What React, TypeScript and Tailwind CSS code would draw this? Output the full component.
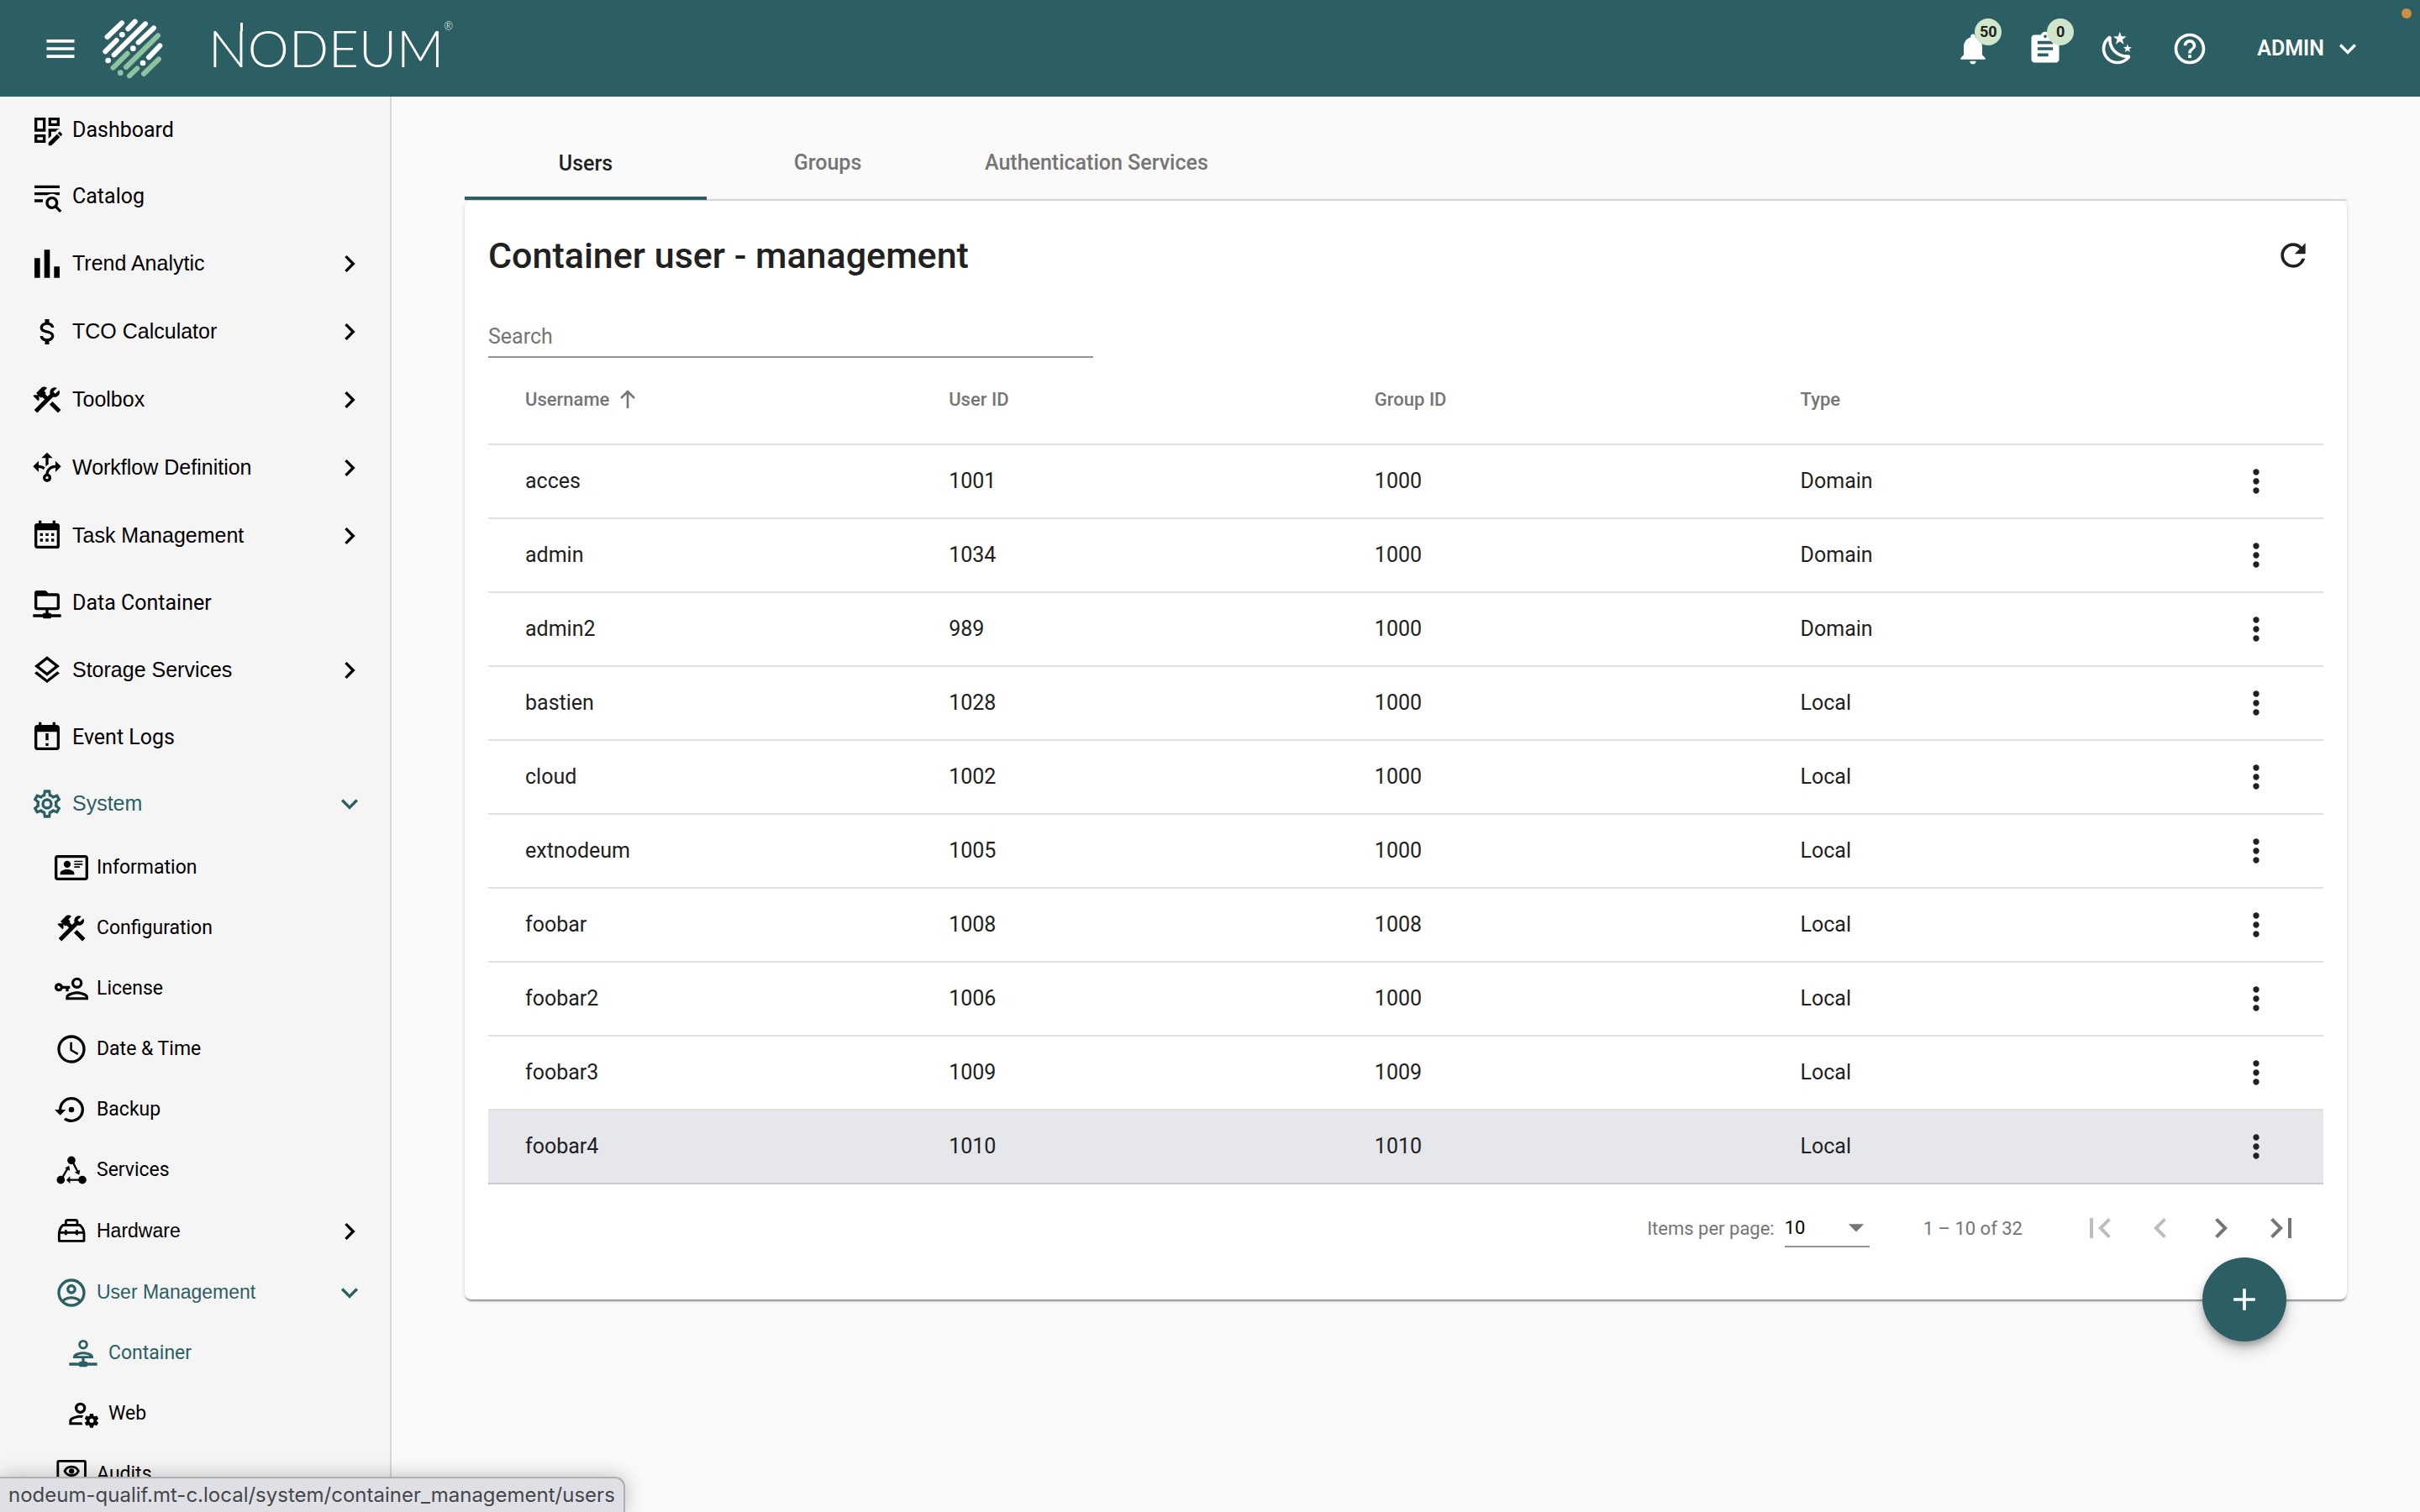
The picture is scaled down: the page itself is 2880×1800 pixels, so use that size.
import React from "react";
import {
  MdAdd,
  MdArrowDropDown,
  MdAssignment,
  MdChevronLeft,
  MdChevronRight,
  MdExpandMore,
  MdFirstPage,
  MdHelpOutline,
  MdLastPage,
  MdMenu,
  MdMoreVert,
  MdNotifications,
  MdRefresh,
} from "react-icons/md";

const paths = {
  dashboard:
    "M21 13.1C20.9 13.1 20.7 13.2 20.6 13.3L19.6 14.3L21.7 16.4L22.7 15.4C22.9 15.2 22.9 14.8 22.7 14.6L21.4 13.3C21.3 13.2 21.2 13.1 21 13.1M19.1 14.9L13 20.9V23H15.1L21.2 16.9L19.1 14.9M21 3H13V9H21V3M19 7H15V5H19V7M13 18.06V11H21V11.1C20.24 11.1 19.57 11.5 19.19 11.89L18.07 13H15V16.07L13 18.06M11 3H3V13H11V3M9 11H5V5H9V11M11 20.06V15H3V21H11V20.06M9 19H5V17H9V19Z",
  catalog:
    "M19.31 18.9L22.39 22L21 23.39L17.88 20.32C17.19 20.75 16.37 21 15.5 21C13 21 11 19 11 16.5C11 14 13 12 15.5 12C18 12 20 14 20 16.5C20 17.38 19.75 18.21 19.31 18.9M15.5 19C16.88 19 18 17.88 18 16.5C18 15.12 16.88 14 15.5 14C14.12 14 13 15.12 13 16.5C13 17.88 14.12 19 15.5 19M21 4V6H3V4H21M3 16V14H9V16H3M3 11V9H21V11H18.97C17.96 10.37 16.77 10 15.5 10C14.23 10 13.04 10.37 12.03 11H3Z",
  poll: "M3,22V8H7V22H3M10,22V2H14V22H10M17,22V14H21V22H17Z",
  dollar:
    "M7,15H9C9,16.08 10.37,17 12,17C13.63,17 15,16.08 15,15C15,13.9 13.96,13.5 11.76,12.97C9.64,12.44 7,11.78 7,9C7,7.21 8.47,5.69 10.5,5.18V3H13.5V5.18C15.53,5.69 17,7.21 17,9H15C15,7.92 13.63,7 12,7C10.37,7 9,7.92 9,9C9,10.1 10.04,10.5 12.24,11.03C14.36,11.56 17,12.22 17,15C17,16.79 15.53,18.31 13.5,18.82V21H10.5V18.82C8.47,18.31 7,16.79 7,15Z",
  tools:
    "M13.78 15.3L19.78 21.3L21.89 19.14L15.89 13.14L13.78 15.3M17.5 10.1C17.11 10.1 16.69 10.05 16.36 9.91L4.97 21.25L2.86 19.14L10.27 11.74L8.5 9.96L7.78 10.66L6.33 9.25V12.11L5.63 12.81L2.11 9.25L2.81 8.55H5.62L4.22 7.14L7.78 3.58C8.95 2.41 10.83 2.41 12 3.58L9.89 5.74L11.3 7.14L10.59 7.85L12.38 9.63L14.2 7.75C14.06 7.42 14 7 14 6.63C14 4.66 15.56 3.11 17.5 3.11C18.09 3.11 18.61 3.25 19.08 3.53L16.41 6.2L17.91 7.7L20.58 5.03C20.86 5.5 21 6 21 6.63C21 8.55 19.45 10.1 17.5 10.1Z",
  workflow:
    "M9.64,13.4C8.63,12.5 7.34,12.03 6,12V15L2,11L6,7V10C7.67,10 9.3,10.57 10.63,11.59C10.22,12.15 9.89,12.76 9.64,13.4M18,15V12C17.5,12 13.5,12.16 13.05,16.2C14.61,16.75 15.43,18.47 14.88,20.03C14.33,21.59 12.61,22.41 11.05,21.86C9.5,21.3 8.67,19.59 9.22,18.03C9.5,17.17 10.2,16.5 11.05,16.2C11.34,12.61 14.4,9.88 18,10V7L22,11L18,15M13,19A1,1 0 0,0 12,18A1,1 0 0,0 11,19A1,1 0 0,0 12,20A1,1 0 0,0 13,19M11,11.12C11.58,10.46 12.25,9.89 13,9.43V5H16L12,1L8,5H11V11.12Z",
  calendar:
    "M9,10V12H7V10H9M13,10V12H11V10H13M17,10V12H15V10H17M19,3A2,2 0 0,1 21,5V19A2,2 0 0,1 19,21H5C3.89,21 3,20.1 3,19V5A2,2 0 0,1 5,3H6V1H8V3H16V1H18V3H19M19,19V8H5V19H19M9,14V16H7V14H9M13,14V16H11V14H13M17,14V16H15V14H17Z",
  folder:
    "M15,20A1,1 0 0,0 14,19H13V17H19A2,2 0 0,0 21,15V7A2,2 0 0,0 19,5H13L11,3H5A2,2 0 0,0 3,5V15A2,2 0 0,0 5,17H11V19H10A1,1 0 0,0 9,20H2V22H9A1,1 0 0,0 10,23H14A1,1 0 0,0 15,22H22V20H15M5,15V7H19V15H5Z",
  layers:
    "M12,18.54L19.37,12.8L21,14.07L12,21.07L3,14.07L4.62,12.81L12,18.54M12,16L3,9L12,2L21,9L12,16M12,4.53L6.26,9L12,13.47L17.74,9L12,4.53Z",
  events:
    "M19 3H18V1H16V3H8V1H6V3H5C3.89 3 3 3.9 3 5V19C3 20.1 3.89 21 5 21H19C20.11 21 21 20.1 21 19V5C21 3.9 20.11 3 19 3M19 19H5V8H19V19M11 9H13V14H11V9M11 16H13V18H11Z",
  cog: "M12,8A4,4 0 0,1 16,12A4,4 0 0,1 12,16A4,4 0 0,1 8,12A4,4 0 0,1 12,8M12,10A2,2 0 0,0 10,12A2,2 0 0,0 12,14A2,2 0 0,0 14,12A2,2 0 0,0 12,10M10,22C9.75,22 9.54,21.82 9.5,21.58L9.13,18.93C8.5,18.68 7.96,18.34 7.44,17.94L4.95,18.95C4.73,19.03 4.46,18.95 4.34,18.73L2.34,15.27C2.21,15.05 2.27,14.78 2.46,14.63L4.57,12.97L4.5,12L4.57,11L2.46,9.37C2.27,9.22 2.21,8.95 2.34,8.73L4.34,5.27C4.46,5.05 4.73,4.96 4.95,5.05L7.44,6.05C7.96,5.66 8.5,5.32 9.13,5.07L9.5,2.42C9.54,2.18 9.75,2 10,2H14C14.25,2 14.46,2.18 14.5,2.42L14.87,5.07C15.5,5.32 16.04,5.66 16.56,6.05L19.05,5.05C19.27,4.96 19.54,5.05 19.66,5.27L21.66,8.73C21.79,8.95 21.73,9.22 21.54,9.37L19.43,11L19.5,12L19.43,13L21.54,14.63C21.73,14.78 21.79,15.05 21.66,15.27L19.66,18.73C19.54,18.95 19.27,19.04 19.05,18.95L16.56,17.95C16.04,18.34 15.5,18.68 14.87,18.93L14.5,21.58C14.46,21.82 14.25,22 14,22H10M11.25,4L10.88,6.61C9.68,6.86 8.62,7.5 7.85,8.39L5.44,7.35L4.69,8.65L6.8,10.2C6.4,11.37 6.4,12.64 6.8,13.8L4.68,15.36L5.43,16.66L7.86,15.62C8.63,16.5 9.68,17.14 10.87,17.38L11.24,20H12.76L13.13,17.39C14.32,17.14 15.37,16.5 16.14,15.62L18.57,16.66L19.32,15.36L17.2,13.81C17.6,12.64 17.6,11.37 17.2,10.2L19.31,8.65L18.56,7.35L16.15,8.39C15.38,7.5 14.32,6.86 13.12,6.62L12.75,4H11.25Z",
  card: "M22,3H2C0.91,3.04 0.04,3.91 0,5V19C0.04,20.09 0.91,20.96 2,21H22C23.09,20.96 23.96,20.09 24,19V5C23.96,3.91 23.09,3.04 22,3M22,19H2V5H22V19M14,17V15.75C14,14.09 10.66,13.25 9,13.25C7.34,13.25 4,14.09 4,15.75V17H14M9,7A2.5,2.5 0 0,0 6.5,9.5A2.5,2.5 0 0,0 9,12A2.5,2.5 0 0,0 11.5,9.5A2.5,2.5 0 0,0 9,7M14,7V8H20V7H14M14,9V10H20V9H14M14,11V12H18V11H14",
  license:
    "M11 10V12H10V14H8V12H5.8C5.4 13.2 4.3 14 3 14C1.3 14 0 12.7 0 11S1.3 8 3 8C4.3 8 5.4 8.8 5.8 10H11M3 10C2.4 10 2 10.4 2 11S2.4 12 3 12 4 11.6 4 11 3.6 10 3 10M16 14C18.7 14 24 15.3 24 18V20H8V18C8 15.3 13.3 14 16 14M16 15.9C13 15.9 9.9 17.4 9.9 18V18.1H22.1V18C22.1 17.4 19 15.9 16 15.9M16 4C18.2 4 20 5.8 20 8S18.2 12 16 12C13.8 12 12 10.2 12 8S13.8 4 16 4M16 5.9C14.8 5.9 13.9 6.8 13.9 8 13.9 9.2 14.8 10.1 16 10.1S18.1 9.2 18.1 8C18.1 6.8 17.2 5.9 16 5.9Z",
  clock:
    "M12,20A8,8 0 0,0 20,12A8,8 0 0,0 12,4A8,8 0 0,0 4,12A8,8 0 0,0 12,20M12,2A10,10 0 0,1 22,12A10,10 0 0,1 12,22C6.47,22 2,17.5 2,12A10,10 0 0,1 12,2M12.5,7V12.25L17,14.92L16.25,16.15L11,13V7H12.5Z",
  backup:
    "M12,3A9,9 0 0,0 3,12H0L4,16L8,12H5A7,7 0 0,1 12,5A7,7 0 0,1 19,12A7,7 0 0,1 12,19C10.5,19 9.09,18.5 7.94,17.7L6.5,19.14C8.04,20.3 9.94,21 12,21A9,9 0 0,0 21,12A9,9 0 0,0 12,3M14,12A2,2 0 0,0 12,10A2,2 0 0,0 10,12A2,2 0 0,0 12,14A2,2 0 0,0 14,12Z",
  account:
    "M12,2A10,10 0 0,0 2,12A10,10 0 0,0 12,22A10,10 0 0,0 22,12A10,10 0 0,0 12,2M7.07,18.28C7.5,17.38 10.12,16.5 12,16.5C13.88,16.5 16.5,17.38 16.93,18.28C15.57,19.36 13.86,20 12,20C10.14,20 8.43,19.36 7.07,18.28M18.36,16.83C16.93,15.09 13.46,14.5 12,14.5C10.54,14.5 7.07,15.09 5.64,16.83C4.62,15.5 4,13.82 4,12C4,7.59 7.59,4 12,4C16.41,4 20,7.59 20,12C20,13.82 19.38,15.5 18.36,16.83M12,6C10.06,6 8.5,7.56 8.5,9.5C8.5,11.44 10.06,13 12,13C13.94,13 15.5,11.44 15.5,9.5C15.5,7.56 13.94,6 12,6M12,11A1.5,1.5 0 0,1 10.5,9.5A1.5,1.5 0 0,1 12,8A1.5,1.5 0 0,1 13.5,9.5A1.5,1.5 0 0,1 12,11Z",
  web: "M10 4A4 4 0 0 0 6 8A4 4 0 0 0 10 12A4 4 0 0 0 14 8A4 4 0 0 0 10 4M10 6A2 2 0 0 1 12 8A2 2 0 0 1 10 10A2 2 0 0 1 8 8A2 2 0 0 1 10 6M17 12C16.84 12 16.76 12.08 16.76 12.24L16.5 13.5C16.28 13.68 15.96 13.84 15.72 14L14.44 13.5C14.36 13.5 14.2 13.5 14.12 13.6L13.16 15.36C13.08 15.44 13.08 15.6 13.24 15.68L14.28 16.5V17.5L13.24 18.32C13.16 18.4 13.08 18.56 13.16 18.64L14.12 20.4C14.2 20.5 14.36 20.5 14.44 20.5L15.72 20C15.96 20.16 16.28 20.32 16.5 20.5L16.76 21.76C16.76 21.92 16.84 22 17 22H19C19.08 22 19.24 21.92 19.24 21.76L19.4 20.5C19.72 20.32 20.04 20.16 20.28 20L21.5 20.5C21.64 20.5 21.8 20.5 21.8 20.4L22.84 18.64C22.92 18.56 22.84 18.4 22.76 18.32L21.72 17.5V16.5L22.76 15.68C22.84 15.6 22.92 15.44 22.84 15.36L21.8 13.6C21.8 13.5 21.64 13.5 21.5 13.5L20.28 14C20.04 13.84 19.72 13.68 19.4 13.5L19.24 12.24C19.24 12.08 19.08 12 19 12H17M10 13C7.33 13 2 14.33 2 17V20H11.67C11.39 19.41 11.19 18.77 11.09 18.1H3.9V17C3.9 16.36 7.03 14.9 10 14.9C10.43 14.9 10.87 14.94 11.3 15C11.5 14.36 11.77 13.76 12.12 13.21C11.34 13.08 10.6 13 10 13M18.04 15.5C18.84 15.5 19.5 16.16 19.5 17.04C19.5 17.84 18.84 18.5 18.04 18.5C17.16 18.5 16.5 17.84 16.5 17.04C16.5 16.16 17.16 15.5 18.04 15.5Z",
  night:
    "M17.75,4.09L15.22,6.03L16.13,9.09L13.5,7.28L10.87,9.09L11.78,6.03L9.25,4.09L12.44,4L13.5,1L14.56,4L17.75,4.09M21.25,11L19.61,12.25L20.2,14.23L18.5,13.06L16.8,14.23L17.39,12.25L15.75,11L17.81,10.95L18.5,9L19.19,10.95L21.25,11M18.97,15.95C19.8,15.87 20.69,17.05 20.16,17.8C19.84,18.25 19.5,18.67 19.08,19.07C15.17,23 8.84,23 4.94,19.07C1.03,15.17 1.03,8.83 4.94,4.93C5.34,4.53 5.76,4.17 6.21,3.85C6.96,3.32 8.14,4.21 8.06,5.04C7.79,7.9 8.75,10.87 10.95,13.06C13.14,15.26 16.1,16.22 18.97,15.95M17.33,17.97C14.5,17.81 11.7,16.64 9.53,14.5C7.36,12.31 6.2,9.5 6.04,6.68C3.23,9.82 3.34,14.64 6.35,17.66C9.37,20.67 14.19,20.78 17.33,17.97Z",
};

function Glyph({ d, className = "size-10" }: { d: string; className?: string }) {
  return (
    <svg viewBox="0 0 24 24" fill="currentColor" aria-hidden="true" className={`shrink-0 ${className}`}>
      <path d={d} />
    </svg>
  );
}

function ServicesIcon() {
  return (
    <svg viewBox="0 0 24 24" fill="currentColor" aria-hidden="true" className="size-10 shrink-0">
      <circle cx="12" cy="5" r="2.9" />
      <circle cx="4.4" cy="19" r="2.9" />
      <circle cx="19.8" cy="19" r="2.9" />
      <path d="M5 18.2 9.3 10.8M12.8 6 16.6 13.4M19 19H10" stroke="currentColor" strokeWidth="1.4" />
      <path d="M10.4 8.9 10.9 12.5 7.3 10.5ZM17.6 15.4 14.3 13.7 18.1 11.8ZM8.4 19 11 16.4V21.6Z" />
    </svg>
  );
}

function HardwareIcon() {
  return (
    <svg
      viewBox="0 0 24 24"
      fill="none"
      stroke="currentColor"
      strokeWidth="1.7"
      strokeLinejoin="round"
      aria-hidden="true"
      className="size-10 shrink-0"
    >
      <path d="M8 7.3V5.2C8 4.4 8.5 3.9 9.3 3.9H14.9C15.7 3.9 16.2 4.4 16.2 5.2V7.3" />
      <path d="M6 7.5H18C19.5 8.6 20.8 11.4 21 13.5V18.8H3.2V13.5C3.4 11.4 4.5 8.6 6 7.5Z" />
      <path d="M3.2 12.8H21M8 11V14.6M15.9 11V14.6" />
    </svg>
  );
}

function ContainerIcon() {
  return (
    <svg viewBox="0 0 24 24" fill="currentColor" aria-hidden="true" className="size-10 shrink-0">
      <circle cx="12" cy="5.8" r="2.6" fill="none" stroke="currentColor" strokeWidth="1.7" />
      <path d="M4.8 15.6V14.6C4.8 12.2 8.6 10.9 12 10.9S19.2 12.2 19.2 14.6V15.6ZM7.4 13.9H16.6C15.6 13.1 13.8 12.7 12 12.7S8.4 13.1 7.4 13.9Z" fillRule="evenodd" />
      <path d="M11 15H13V17.8H14A1 1 0 0 1 15 18.8H22V20.8H15A1 1 0 0 1 14 21.8H10A1 1 0 0 1 9 20.8H2V18.8H9A1 1 0 0 1 10 17.8H11Z" />
    </svg>
  );
}

function AuditsIcon() {
  return (
    <svg viewBox="0 0 24 24" fill="none" stroke="currentColor" strokeWidth="1.7" aria-hidden="true" className="size-10 shrink-0">
      <rect x="2.3" y="2.6" width="19.6" height="18.6" rx="0.8" />
      <path d="M7.2 9.8C8 7.8 9.8 6.7 12.1 6.7S16.2 7.8 17 9.8C16.2 11.8 14.4 12.9 12.1 12.9S8 11.8 7.2 9.8Z" />
      <circle cx="12.1" cy="9.8" r="1.9" fill="currentColor" stroke="none" />
    </svg>
  );
}

function LogoMark() {
  return (
    <svg viewBox="36 38 216 216" fill="none" strokeWidth="18" strokeLinecap="round" aria-hidden="true" className="size-18 shrink-0">
      <path
        stroke="#ffffff"
        d="M53 104 105 54M127 75 152 49M77 168 189 57M164 124 219 72M46 156 86 116M201 177 241 135"
      />
      <path stroke="#8fc3a0" d="M120 212 234 99M74 214 125 163M132 243 160 216M183 236 237 183" />
      <g fill="#ffffff">
        <circle cx="106" cy="96" r="10" />
        <circle cx="145" cy="145" r="10" />
        <circle cx="56" cy="188" r="10" />
        <circle cx="180" cy="197" r="10" />
      </g>
      <circle cx="100" cy="232" r="10" fill="#8fc3a0" />
    </svg>
  );
}

const teal = "text-[#2c5f63]";
const arial = "font-['Liberation_Sans',Arial,sans-serif]";

type Entry = {
  label: string;
  icon: React.ReactNode;
  row: string;
  expand?: "closed" | "open";
  active?: boolean;
};

const link = "h-[79px] pl-9 gap-2.5 text-[25px]";
const group = "h-[81px] pl-9 gap-2.5 text-[25px]";
const openGroup = "h-20 pl-9 gap-2.5 text-[25px]";
const subLink = "h-[72px] pl-[65px] gap-2.5 text-[23px]";
const subGroup = "h-[73px] pl-[65px] gap-2.5 text-[23px]";
const leaf = "h-[72px] pl-[79px] gap-2.5 text-[23px]";

const entries: Entry[] = [
  { label: "Dashboard", icon: <Glyph d={paths.dashboard} />, row: link },
  { label: "Catalog", icon: <Glyph d={paths.catalog} />, row: link },
  { label: "Trend Analytic", icon: <Glyph d={paths.poll} />, row: group, expand: "closed" },
  { label: "TCO Calculator", icon: <Glyph d={paths.dollar} />, row: group, expand: "closed" },
  { label: "Toolbox", icon: <Glyph d={paths.tools} />, row: group, expand: "closed" },
  { label: "Workflow Definition", icon: <Glyph d={paths.workflow} />, row: group, expand: "closed" },
  { label: "Task Management", icon: <Glyph d={paths.calendar} />, row: group, expand: "closed" },
  { label: "Data Container", icon: <Glyph d={paths.folder} />, row: link },
  { label: "Storage Services", icon: <Glyph d={paths.layers} />, row: group, expand: "closed" },
  { label: "Event Logs", icon: <Glyph d={paths.events} />, row: link },
  { label: "System", icon: <Glyph d={paths.cog} />, row: openGroup, expand: "open", active: true },
  { label: "Information", icon: <Glyph d={paths.card} />, row: subLink },
  { label: "Configuration", icon: <Glyph d={paths.tools} />, row: subLink },
  { label: "License", icon: <Glyph d={paths.license} />, row: subLink },
  { label: "Date & Time", icon: <Glyph d={paths.clock} />, row: subLink },
  { label: "Backup", icon: <Glyph d={paths.backup} />, row: subLink },
  { label: "Services", icon: <ServicesIcon />, row: subLink },
  { label: "Hardware", icon: <HardwareIcon />, row: subGroup, expand: "closed" },
  { label: "User Management", icon: <Glyph d={paths.account} />, row: subGroup, expand: "open", active: true },
  { label: "Container", icon: <ContainerIcon />, row: leaf, active: true },
  { label: "Web", icon: <Glyph d={paths.web} />, row: leaf },
  { label: "Audits", icon: <AuditsIcon />, row: subLink },
];

function NavEntry({ entry }: { entry: Entry }) {
  const tone = entry.active ? teal : "text-black";
  if (entry.expand) {
    return (
      <button
        type="button"
        aria-expanded={entry.expand === "open"}
        className={`flex w-full items-center pr-7 text-left ${arial} ${entry.row} ${tone}`}
      >
        {entry.icon}
        <span className="flex-1 whitespace-nowrap">{entry.label}</span>
        {entry.expand === "open" ? (
          <MdExpandMore className="size-10 shrink-0" />
        ) : (
          <MdChevronRight className="size-10 shrink-0" />
        )}
      </button>
    );
  }
  return (
    <a href="#" className={`flex items-center ${entry.row} ${tone}`}>
      {entry.icon}
      <span className="whitespace-nowrap">{entry.label}</span>
    </a>
  );
}

const users = [
  ["acces", "1001", "1000", "Domain"],
  ["admin", "1034", "1000", "Domain"],
  ["admin2", "989", "1000", "Domain"],
  ["bastien", "1028", "1000", "Local"],
  ["cloud", "1002", "1000", "Local"],
  ["extnodeum", "1005", "1000", "Local"],
  ["foobar", "1008", "1008", "Local"],
  ["foobar2", "1006", "1000", "Local"],
  ["foobar3", "1009", "1009", "Local"],
  ["foobar4", "1010", "1010", "Local"],
];

function Badge({ children }: { children: React.ReactNode }) {
  return (
    <span className="absolute -top-3.5 left-6 flex size-8 items-center justify-center rounded-full bg-[#cfe6cb] text-[18px] font-bold text-[#1f1f1f]">
      {children}
    </span>
  );
}

function Header() {
  return (
    <header className="relative flex h-[115px] shrink-0 items-center bg-[#2c5f63] pr-[66px] pl-[50px] text-white">
      <button type="button" aria-label="Toggle menu">
        <MdMenu className="size-11" />
      </button>
      <a href="#" aria-label="Nodeum" className="ml-7 flex items-center">
        <LogoMark />
        <span className="relative ml-[54px] pb-1 font-['Lato',sans-serif] text-[62px] leading-none font-light">
          <span className="relative">
            N
            {/* the right stem of the N rises above the other capitals */}
            <span className="absolute top-2 right-[6px] h-2.5 w-[3px] bg-white" />
          </span>
          ODEUM
          <sup className="absolute top-0 left-full text-[13px] leading-none">®</sup>
        </span>
      </a>
      <div className="ml-auto flex items-center gap-[42px]">
        <button type="button" aria-label="Notifications" className="relative">
          <MdNotifications className="size-11" />
          <Badge>50</Badge>
        </button>
        <button type="button" aria-label="Tasks" className="relative">
          <MdAssignment className="size-11" />
          <Badge>0</Badge>
        </button>
        <button type="button" aria-label="Dark mode">
          <Glyph d={paths.night} className="size-11" />
        </button>
        <button type="button" aria-label="Help">
          <MdHelpOutline className="size-11" />
        </button>
      </div>
      <button type="button" className="ml-[58px] flex items-center gap-2 text-[25px] font-semibold">
        ADMIN
        <MdExpandMore className="size-10" />
      </button>
      <span className="absolute top-2.5 right-2.5 size-3 rounded-full bg-[#c98f42]" />
    </header>
  );
}

function Tabs() {
  return (
    <div role="tablist" className="flex h-[90px] border-b-2 border-[#dcdcdc] text-[25px] font-medium text-[#757575]">
      <button type="button" role="tab" aria-selected="true" className="-mb-px w-72 border-b-4 border-[#2c5f63] pt-1.5 text-[#212121]">
        Users
      </button>
      <button type="button" role="tab" aria-selected="false" className="w-72 pt-0.5">
        Groups
      </button>
      <button type="button" role="tab" aria-selected="false" className="px-[43px] pt-0.5">
        Authentication Services
      </button>
    </div>
  );
}

function UserTable() {
  return (
    <table className="w-full table-fixed border-separate border-spacing-0 text-left">
      <colgroup>
        <col className="w-[25.1%]" />
        <col className="w-[23.2%]" />
        <col className="w-[23.2%]" />
        <col className="w-[23.2%]" />
        <col />
      </colgroup>
      <thead>
        <tr className="h-[104px] text-[22px] text-[#757575] *:border-b-2 *:border-[#e0e0e0] *:pb-1 *:font-medium">
          <th scope="col" aria-sort="ascending" className="pl-11">
            <button type="button" className="flex items-center gap-3">
              Username
              <svg viewBox="0 0 20 22" fill="none" stroke="currentColor" strokeWidth="2.6" aria-hidden="true" className="h-[22px] w-5">
                <path d="M10 22V2M2 10 10 2 18 10" />
              </svg>
            </button>
          </th>
          <th scope="col">User ID</th>
          <th scope="col">Group ID</th>
          <th scope="col">Type</th>
          <th scope="col" aria-label="Actions" />
        </tr>
      </thead>
      <tbody className="text-[25px] text-[#212121]">
        {users.map(([name, uid, gid, type], i) => (
          <tr
            key={name}
            className={
              i === users.length - 1
                ? "h-22 bg-[#e5e7eb] *:border-b-2 *:border-[#c9cccf]"
                : "h-22 *:border-b-2 *:border-[#e0e0e0]"
            }
          >
            <td className="pl-11">{name}</td>
            <td>{uid}</td>
            <td>{gid}</td>
            <td>{type}</td>
            <td className="pl-3.5">
              <button type="button" aria-label={`Actions for ${name}`} className="block">
                <MdMoreVert className="size-11" />
              </button>
            </td>
          </tr>
        ))}
      </tbody>
    </table>
  );
}

function Paginator() {
  return (
    <div className="flex h-26 items-center justify-end pr-3.5 text-[22px] text-[#757575]">
      <label htmlFor="page-size">Items per page:</label>
      <span className="relative ml-3 flex w-[101px] items-center border-b-2 border-[#949494]">
        <select id="page-size" defaultValue="10" className="h-11 w-full appearance-none bg-transparent text-[22px] text-black">
          <option>10</option>
          <option>25</option>
          <option>50</option>
        </select>
        <MdArrowDropDown className="pointer-events-none absolute right-0 -mr-1.5 size-11" />
      </span>
      <span className="ml-16">1 – 10 of 32</span>
      <div className="ml-14 flex *:flex *:w-18 *:justify-center">
        <button type="button" disabled aria-label="First page" className="text-[#bdbdbd]">
          <MdFirstPage className="size-12" />
        </button>
        <button type="button" disabled aria-label="Previous page" className="text-[#bdbdbd]">
          <MdChevronLeft className="size-12" />
        </button>
        <button type="button" aria-label="Next page">
          <MdChevronRight className="size-12" />
        </button>
        <button type="button" aria-label="Last page">
          <MdLastPage className="size-12" />
        </button>
      </div>
    </div>
  );
}

export default function App() {
  return (
    <div className="relative flex h-screen flex-col overflow-hidden bg-[#fafafa] font-['Roboto',sans-serif] text-[#212121]">
      <Header />
      <div className="flex min-h-0 flex-1">
        <nav aria-label="Main" className="w-[466px] shrink-0 overflow-hidden border-r-2 border-[#d6d6d6] bg-[#f5f5f5]">
          {entries.map((entry) => (
            <NavEntry key={entry.label} entry={entry} />
          ))}
        </nav>
        <main className="min-w-0 flex-1 px-[87px] pt-[34px]">
          <Tabs />
          <section className="relative rounded-lg bg-white px-7 pt-8 pb-[33px] shadow-[0_3px_2px_-1px_rgba(0,0,0,0.38),0_1px_5px_rgba(0,0,0,0.14)]">
            <div className="flex h-[66px] items-center justify-between pr-3.5">
              <h1 className="text-[43px] font-medium">Container user - management</h1>
              <button type="button" aria-label="Refresh">
                <MdRefresh className="size-11" />
              </button>
            </div>
            <input
              type="search"
              aria-label="Search"
              placeholder="Search"
              className="mt-[37px] block h-13 w-[720px] border-b-2 border-[#949494] bg-transparent pt-0.5 text-[25px] outline-none placeholder:text-[#757575]"
            />
            <UserTable />
            <Paginator />
            <button
              type="button"
              aria-label="Add user"
              className="absolute right-18 -bottom-[50px] flex size-25 items-center justify-center rounded-full bg-[#2c5f63] text-white shadow-[0_6px_10px_-2px_rgba(0,0,0,0.3),0_10px_20px_rgba(0,0,0,0.18)]"
            >
              <MdAdd className="size-11" />
            </button>
          </section>
        </main>
      </div>
      <div className="absolute bottom-0 left-0 flex h-[42px] items-center rounded-tr-xl border-t-2 border-r-2 border-[#b0b0b4] bg-[#dfe0e6] pr-2.5 pl-2.5 font-['Inter',sans-serif] text-[24px] text-[#45464a] shadow-[0_0_24px_rgba(0,0,0,0.25)]">
        nodeum-qualif.mt-c.local/system/container_management/users
      </div>
    </div>
  );
}
